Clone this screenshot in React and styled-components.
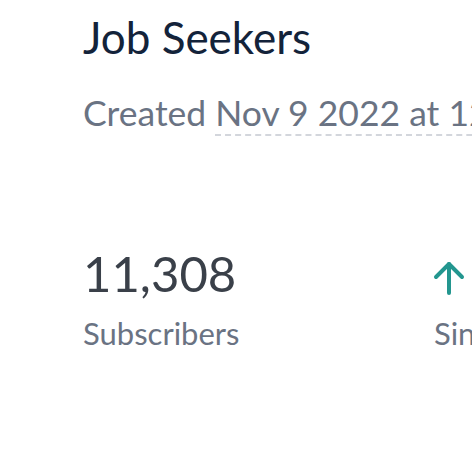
import React from "react";
import styled, { createGlobalStyle } from "styled-components";

const Global = createGlobalStyle`
  html, body { margin: 0; padding: 0; background: #ffffff; }
  body { font-family: Lato, "Open Sans", sans-serif; overflow: hidden; }
`;

const Page = styled.div`
  width: 472px;
  height: 459px;
  overflow: hidden;
  padding: 11px 0 0 83px;
  box-sizing: border-box;
`;

const Title = styled.h1`
  margin: 0;
  font-size: 44px;
  line-height: 52px;
  font-weight: 400;
  color: #13233a;
  white-space: nowrap;
`;

const Meta = styled.div`
  margin-top: 29px;
  font-size: 35.5px;
  line-height: 42px;
  color: #6a7383;
  white-space: nowrap;
`;

const Dotted = styled.span`
  border-bottom: 2px dashed #d3d6dc;
`;

const Stats = styled.div`
  margin-top: 110px;
  display: grid;
  grid-template-columns: 351px auto;
  white-space: nowrap;
`;

const Stat = styled.div`
  display: flex;
  flex-direction: column;
`;

const Value = styled.div`
  display: flex;
  align-items: center;
  gap: 12px;
  font-size: 49px;
  line-height: 58px;
  color: #3a4049;
  height: 58px;
`;

const Label = styled.div`
  margin-top: 12px;
  font-size: 31px;
  line-height: 38px;
  color: #6a7383;
`;

const Arrow = styled.svg`
  margin-left: -2px;
  margin-top: 10px;
  flex: none;
`;

const Up = () => (
  <Arrow width="34" height="38" viewBox="0 0 34 38">
    <g fill="none" stroke="#23968f" strokeWidth="4" strokeLinecap="round" strokeLinejoin="round">
      <path d="M17 5 V34" />
      <path d="M4 18 L17 5 L30 18" />
    </g>
  </Arrow>
);

export default function App() {
  return (
    <>
      <Global />
      <Page>
        <Title>Job Seekers</Title>
        <Meta>
          Created <Dotted>Nov 9 2022 at 12:04 PM</Dotted>
        </Meta>
        <Stats>
          <Stat>
            <Value>11,308</Value>
            <Label>Subscribers</Label>
          </Stat>
          <Stat>
            <Value>
              <Up />
              <span>2.4%</span>
            </Value>
            <Label>Since last month</Label>
          </Stat>
        </Stats>
      </Page>
    </>
  );
}
